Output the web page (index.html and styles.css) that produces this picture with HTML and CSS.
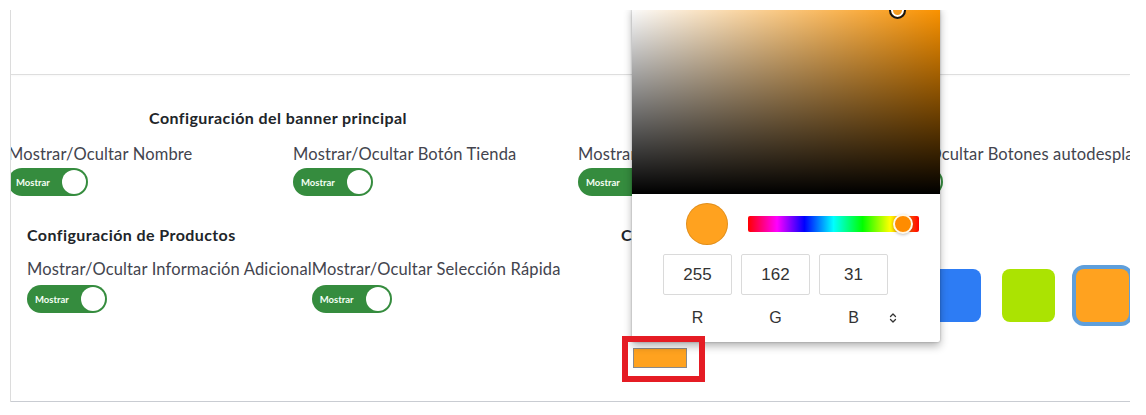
FILE: index.html
```html
<!DOCTYPE html>
<html lang="es">
<head>
<meta charset="utf-8">
<title>Configuración</title>
<link rel="stylesheet" href="styles.css">
</head>
<body>
<div class="viewport">
  <div class="panel">
    <div class="panel-top"></div>
    <div class="panel-body">
      <section class="banner">
        <h3 class="sec-title banner-title">Configuración del banner principal</h3>
        <div class="cols4">
          <div class="opt">
            <span class="opt-label">Mostrar/Ocultar Nombre</span>
            <span class="switch"><span class="switch-text">Mostrar</span><span class="knob"></span></span>
          </div>
          <div class="opt">
            <span class="opt-label">Mostrar/Ocultar Botón Tienda</span>
            <span class="switch"><span class="switch-text">Mostrar</span><span class="knob"></span></span>
          </div>
          <div class="opt">
            <span class="opt-label">Mostrar/Ocultar Descripción</span>
            <span class="switch"><span class="switch-text">Mostrar</span><span class="knob"></span></span>
          </div>
          <div class="opt">
            <span class="opt-label">Mostrar/Ocultar Botones autodesplazamiento</span>
            <span class="switch"><span class="switch-text">Mostrar</span><span class="knob"></span></span>
          </div>
        </div>
      </section>
      <div class="lower">
        <section class="products">
          <h3 class="sec-title">Configuración de Productos</h3>
          <div class="inline-opts">
            <div class="opt">
              <span class="opt-label">Mostrar/Ocultar Información Adicional</span>
              <span class="switch"><span class="switch-text">Mostrar</span><span class="knob"></span></span>
            </div>
            <div class="opt">
              <span class="opt-label">Mostrar/Ocultar Selección Rápida</span>
              <span class="switch"><span class="switch-text">Mostrar</span><span class="knob"></span></span>
            </div>
          </div>
        </section>
        <section class="colors">
          <h3 class="sec-title">Configuración de colores</h3>
          <div class="swatches">
            <span class="swatch sw-red"></span>
            <span class="swatch sw-purple"></span>
            <span class="swatch sw-green"></span>
            <span class="swatch sw-yellow"></span>
            <span class="swatch sw-blue"></span>
            <span class="swatch sw-lime"></span>
            <span class="swatch sw-orange selected"></span>
          </div>
          <span class="current-color"></span>
        </section>
      </div>
    </div>
  </div>

  <div class="picker">
    <div class="saturation">
      <span class="sat-pointer"></span>
    </div>
    <div class="pk-body">
      <div class="pk-top">
        <span class="pk-swatch"></span>
        <div class="hue">
          <span class="hue-thumb"></span>
        </div>
      </div>
      <div class="pk-fields">
        <div class="fld"><span class="fld-input">255</span><span class="fld-label">R</span></div>
        <div class="fld"><span class="fld-input">162</span><span class="fld-label">G</span></div>
        <div class="fld"><span class="fld-input">31</span><span class="fld-label">B</span></div>
        <div class="fld-toggle">
          <svg width="8" height="12" viewBox="0 0 8 12"><path d="M1.5 4.5 L4 2 L6.5 4.5 M1.5 7.5 L4 10 L6.5 7.5" fill="none" stroke="#333" stroke-width="1.3" stroke-linecap="round" stroke-linejoin="round"/></svg>
        </div>
      </div>
    </div>
  </div>

  <div class="annotation"></div>
</div>
</body>
</html>
```

FILE: styles.css
```css
* { box-sizing: border-box; }

html, body {
  margin: 0;
  padding: 0;
  background: #fff;
}

body {
  font-family: Lato, "Open Sans", Arial, sans-serif;
  color: #3f3f48;
  height: 415px;
  overflow: hidden;
}

.viewport {
  position: relative;
  margin-top: 10px;
  height: 405px;
  overflow: hidden;
}

.panel {
  margin-left: 10px;
  width: 1120px;
  border-left: 1px solid #dcdcdc;
  overflow: hidden;
}

.panel-top {
  height: 65px;
  border-bottom: 1px solid #dedede;
  box-shadow: 0 1px 2px rgba(0,0,0,0.03);
}

.panel-body {
  height: 327px;
  border-bottom: 1px solid #c9ccd2;
  padding-top: 33px;
}

.sec-title {
  margin: 0;
  font-size: 16px;
  line-height: 20px;
  font-weight: 700;
  letter-spacing: 0.42px;
  color: #212529;
  white-space: nowrap;
}

.banner-title {
  width: 534px;
  text-align: center;
}

.cols4 {
  display: grid;
  grid-template-columns: repeat(4, 285px);
  margin-left: -3px;
  margin-top: 16px;
}

.opt {
  display: flex;
  flex-direction: column;
  align-items: flex-start;
}

.opt-label {
  font-size: 16.5px;
  line-height: 20px;
  letter-spacing: 0.15px;
  white-space: nowrap;
  color: #43444e;
}

.switch {
  position: relative;
  display: flex;
  align-items: center;
  width: 80px;
  height: 28px;
  margin-top: 4px;
  border-radius: 14px;
  background: #358c3e;
  padding-left: 8px;
}

.switch-text {
  font-size: 9.5px;
  font-weight: 700;
  color: #f4fff4;
}

.knob {
  position: absolute;
  right: 2px;
  top: 2px;
  width: 24px;
  height: 24px;
  border-radius: 50%;
  background: #fff;
}

.lower {
  display: grid;
  grid-template-columns: 594px 1fr;
  padding-left: 16px;
  margin-top: 29px;
}

.inline-opts {
  display: flex;
  margin-top: 14px;
}

.inline-opts .switch {
  margin-top: 6px;
}

.swatches {
  display: flex;
  gap: 21px;
  margin-top: 24px;
  margin-left: 11px;
}

.swatch {
  flex: none;
  width: 53px;
  height: 53px;
  border-radius: 8px;
}

.sw-red { background: #f44336; }
.sw-purple { background: #9c27b0; }
.sw-green { background: #2e9e4f; }
.sw-yellow { background: #ffd600; }
.sw-blue { background: #2d7cf4; }
.sw-lime { background: #abe302; }
.sw-orange { background: #ffa21f; }

.swatch.selected {
  box-shadow: 0 0 0 4px #5f9fdb;
}

.current-color {
  display: block;
  width: 54px;
  height: 20px;
  margin-top: 26px;
  margin-left: 12px;
  background: #ffa21f;
  border: 1px solid #8a8a8a;
}

/* Color picker popover */
.picker {
  position: absolute;
  left: 632px;
  top: -4px;
  width: 308px;
  background: #fff;
  border-radius: 2px;
  box-shadow: 0 0 2px rgba(0,0,0,0.3), 0 4px 8px rgba(0,0,0,0.3);
  font-family: "Liberation Sans", Arial, sans-serif;
}

.saturation {
  position: relative;
  height: 188px;
  background:
    linear-gradient(to top, #000, rgba(0,0,0,0)),
    linear-gradient(to right, #fff, rgba(255,255,255,0)),
    hsl(35, 100%, 50%);
}

.sat-pointer {
  position: absolute;
  left: 257px;
  top: -4px;
  width: 17px;
  height: 17px;
  border-radius: 50%;
  border: 2.5px solid #141414;
  box-shadow: inset 0 0 0 2px #fff;
}

.pk-body {
  height: 148px;
}

.pk-top {
  display: flex;
  align-items: center;
  gap: 20px;
  padding: 9px 21px 0 54px;
}

.pk-swatch {
  flex: none;
  width: 42px;
  height: 42px;
  border-radius: 50%;
  background: #ffa21f;
  box-shadow: inset 0 0 0 1px rgba(0,0,0,0.12);
}

.hue {
  position: relative;
  flex: 1;
  height: 16px;
  border-radius: 2px;
  background: linear-gradient(to left, #f00 0%, #ff0 17%, #0f0 33%, #0ff 50%, #00f 67%, #f0f 83%, #f00 100%);
}

.hue-thumb {
  position: absolute;
  left: 145px;
  top: -2px;
  width: 20px;
  height: 20px;
  border-radius: 50%;
  background: #ff8c00;
  border: 2px solid #fff8e8;
  box-shadow: 0 1px 3px rgba(0,0,0,0.25);
}

.pk-fields {
  display: flex;
  gap: 9px;
  padding-left: 31px;
  margin-top: 9px;
}

.fld {
  display: flex;
  flex-direction: column;
  align-items: center;
  width: 69px;
}

.fld-input {
  display: flex;
  align-items: center;
  justify-content: center;
  width: 69px;
  height: 41px;
  border: 1px solid #dadada;
  border-radius: 2px;
  font-size: 17px;
  color: #333;
}

.fld-label {
  margin-top: 14px;
  font-size: 16px;
  line-height: 18px;
  color: #333;
}

.fld-toggle {
  display: flex;
  align-items: flex-start;
  margin-left: -8px;
  padding-top: 58px;
}

.annotation {
  position: absolute;
  left: 622px;
  top: 326px;
  width: 83px;
  height: 46px;
  border: 6px solid #e51c24;
}
```
